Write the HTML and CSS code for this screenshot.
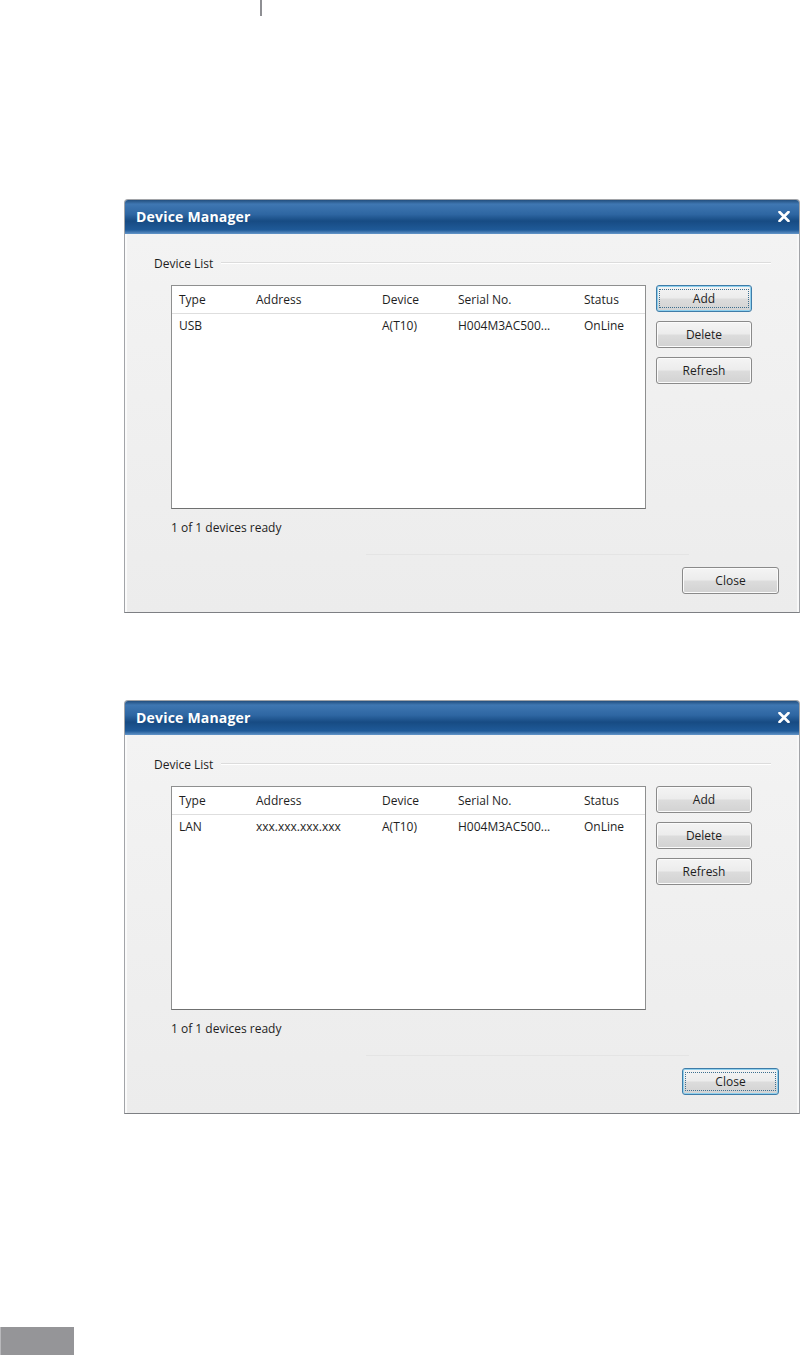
FILE: index.html
```html
<!DOCTYPE html>
<html>
<head>
    <title>Device Manager</title>
    <link rel="stylesheet" href="styles.css">
</head>
<body>
    <div class="tick"></div>

    <div class="dialog dialog-first">
        <div class="titlebar">
            <span class="title">Device Manager</span>
            <svg class="close-x" width="12" height="11" viewBox="0 0 12 11">
                <path d="M1.5 1 L10.5 10 M10.5 1 L1.5 10" stroke="#fff" stroke-width="2.6" stroke-linecap="round"/>
            </svg>
        </div>
        <div class="dialog-body">
            <div class="group-head">
                <span class="group-label">Device List</span>
                <span class="group-line"></span>
            </div>
            <div class="group-content">
                <div class="list-row">
                    <div class="listbox">
                        <div class="lv-row lv-head">
                            <span class="c-type">Type</span>
                            <span class="c-addr">Address</span>
                            <span class="c-dev">Device</span>
                            <span class="c-serial">Serial No.</span>
                            <span class="c-status">Status</span>
                        </div>
                        <div class="lv-row">
                            <span class="c-type">USB</span>
                            <span class="c-addr"></span>
                            <span class="c-dev">A(T10)</span>
                            <span class="c-serial">H004M3AC500...</span>
                            <span class="c-status">OnLine</span>
                        </div>
                    </div>
                    <div class="side-buttons">
                        <button class="btn focused"><span>Add</span></button>
                        <button class="btn"><span>Delete</span></button>
                        <button class="btn"><span>Refresh</span></button>
                    </div>
                </div>
                <div class="status">1 of 1 devices ready</div>
            </div>
            <div class="footer-line"></div>
            <div class="footer">
                <button class="btn btn-close"><span>Close</span></button>
            </div>
        </div>
    </div>

    <div class="dialog dialog-second">
        <div class="titlebar">
            <span class="title">Device Manager</span>
            <svg class="close-x" width="12" height="11" viewBox="0 0 12 11">
                <path d="M1.5 1 L10.5 10 M10.5 1 L1.5 10" stroke="#fff" stroke-width="2.6" stroke-linecap="round"/>
            </svg>
        </div>
        <div class="dialog-body">
            <div class="group-head">
                <span class="group-label">Device List</span>
                <span class="group-line"></span>
            </div>
            <div class="group-content">
                <div class="list-row">
                    <div class="listbox">
                        <div class="lv-row lv-head">
                            <span class="c-type">Type</span>
                            <span class="c-addr">Address</span>
                            <span class="c-dev">Device</span>
                            <span class="c-serial">Serial No.</span>
                            <span class="c-status">Status</span>
                        </div>
                        <div class="lv-row">
                            <span class="c-type">LAN</span>
                            <span class="c-addr">xxx.xxx.xxx.xxx</span>
                            <span class="c-dev">A(T10)</span>
                            <span class="c-serial">H004M3AC500...</span>
                            <span class="c-status">OnLine</span>
                        </div>
                    </div>
                    <div class="side-buttons">
                        <button class="btn"><span>Add</span></button>
                        <button class="btn"><span>Delete</span></button>
                        <button class="btn"><span>Refresh</span></button>
                    </div>
                </div>
                <div class="status">1 of 1 devices ready</div>
            </div>
            <div class="footer-line"></div>
            <div class="footer">
                <button class="btn btn-close focused"><span>Close</span></button>
            </div>
        </div>
    </div>

    <div class="page-tab"></div>
</body>
</html>
```

FILE: styles.css
```css
body {
    margin: 0;
    background: #fff;
    font-family: "Open Sans", "Liberation Sans", sans-serif;
    font-size: 12px;
    color: #1e1e1e;
}
.tick {
    width: 2px;
    height: 16px;
    margin-left: 260px;
    background: #8e8f93;
}
.dialog {
    width: 676px;
    margin-left: 124px;
    border: 1px solid #a2a4a8;
    border-bottom-color: #7d7f83;
    border-radius: 4px 4px 0 0;
    box-sizing: border-box;
    background: #f0f0f0;
}
.dialog-first {
    margin-top: 183px;
}
.dialog-second {
    margin-top: 87px;
}
.titlebar {
    height: 34px;
    display: flex;
    align-items: center;
    justify-content: space-between;
    padding: 0 5px 2px 11px;
    box-sizing: border-box;
    border-radius: 3px 3px 0 0;
    background: linear-gradient(#234f7e 0%, #3f77b2 12%, #2e66a2 42%, #174b83 62%, #1f5a98 88%, #6496c9 100%);
}
.title {
    color: #fff;
    font-weight: bold;
    font-size: 14px;
    letter-spacing: 0.2px;
}
.close-x {
    margin-right: 4px;
}
.dialog-body {
    padding: 20px 18px 18px 27px;
    border-left: 2px solid #fafafa;
    border-right: 2px solid #f8f8f8;
    background: linear-gradient(#f3f3f3, #ececec);
}
.group-head {
    display: flex;
    align-items: center;
    height: 18px;
    margin-right: 8px;
}
.group-label {
    padding-right: 8px;
}
.group-line {
    flex: 1;
    border-top: 1px solid #dcdcdc;
    border-bottom: 1px solid #fff;
}
.group-content {
    padding-left: 17px;
}
.list-row {
    display: flex;
    gap: 10px;
    margin-top: 13px;
}
.listbox {
    width: 475px;
    height: 224px;
    box-sizing: border-box;
    border: 1px solid #8e8f8f;
    border-bottom-color: #6f7070;
    background: #fff;
}
.lv-row {
    display: flex;
    height: 23px;
    align-items: center;
    padding-left: 7px;
}
.lv-head {
    height: 27px;
    border-bottom: 1px solid #dedede;
}
.c-type { width: 77px; }
.c-addr { width: 126px; }
.c-dev { width: 76px; }
.c-serial { width: 126px; }
.c-status { flex: 1; }
.side-buttons {
    display: flex;
    flex-direction: column;
    gap: 9px;
}
.btn {
    width: 96px;
    height: 27px;
    padding: 0;
    font-family: inherit;
    font-size: 12px;
    color: #1e1e1e;
    border: 1px solid #8a8a8a;
    border-radius: 3px;
    background: linear-gradient(#f4f4f4 0%, #ececec 48%, #dcdcdc 52%, #d2d2d2 100%);
    box-shadow: inset 0 0 0 1px #fbfbfb;
}
.btn.focused {
    border-color: #3f7ca8;
    box-shadow: inset 0 0 0 1px #8fd0ee;
}
.btn.focused span {
    display: block;
    margin: 3px;
    line-height: 17px;
    outline: 1px dotted #3d6f8f;
}
.status {
    margin-top: 11px;
    line-height: 16px;
}
.footer-line {
    margin: 18px 90px 0 212px;
    border-top: 1px solid #e4e4e4;
}
.footer {
    display: flex;
    justify-content: flex-end;
    margin-top: 12px;
}
.btn-close {
    width: 97px;
}
.page-tab {
    width: 74px;
    height: 30px;
    margin-top: 213px;
    background: #959598;
    border-left: 1px solid #b8b8bb;
    box-sizing: border-box;
}
```
